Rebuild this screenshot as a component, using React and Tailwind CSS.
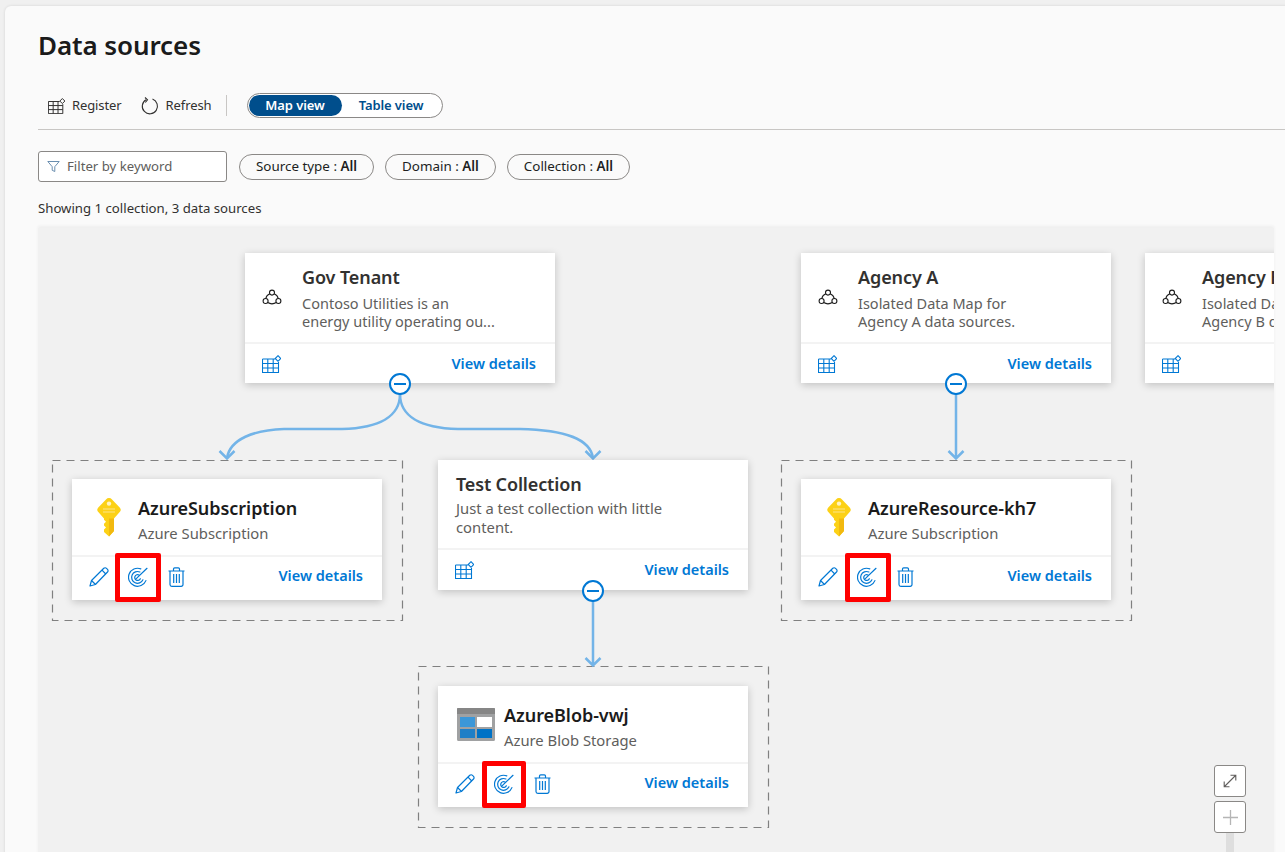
import React from 'react';

const GridIcon = ({ className = 'text-[#0078d4]' }) => (
  <svg width="19" height="18" viewBox="0 0 19 18" fill="none" stroke="currentColor" strokeWidth="1.1" className={className}>
    <path d="M.5 4v13.500h16V7M.5 4h12.500M.5 8.500h16M.5 13h16M5.800 4v13.500M11.200 4v13.500" />
    <path d="M16 .7l2.800 2.800L16 6.300l-2.800-2.800z" />
  </svg>
);

const CollectionIcon = () => (
  <svg width="20" height="18" viewBox="0 0 20 18" fill="none" stroke="#1b1b1b" strokeWidth="1.1">
    <circle cx="10" cy="3.6" r="2.5" />
    <circle cx="3.6" cy="12" r="2.5" />
    <circle cx="16.4" cy="12" r="2.5" />
    <path d="M7.800 4.800C5.600 5.800 4.200 7.500 3.800 9.500M12.200 4.800c2.200 1 3.600 2.700 4 4.700M5.700 13.600c2.600 1.500 6 1.500 8.600 0" />
  </svg>
);

const KeyIcon = () => (
  <svg width="24" height="39" viewBox="0 0 24 39">
    <path d="M9 1.400a4 4 0 0 1 6 0l7.700 8.100a3.400 3.400 0 0 1 0 4.600L17 20.500V33l-5 5.400L7 34v-2.600l2-2-2-2v-1.600l2-2-2-2v-1.300L1.300 14.100a3.400 3.400 0 0 1 0-4.600z" fill="#fcd116" />
    <path d="M12 20.500h5V33l-5 5.400z" fill="#f2b90f" />
    <circle cx="12" cy="5.600" r="2.200" fill="#fff4c2" />
    <path d="M6 11h12M6 14h12" stroke="#fbe58a" strokeWidth="1.2" />
  </svg>
);

const BlobIcon = () => (
  <svg width="38" height="33" viewBox="0 0 38 33">
    <path d="M0 1.500A1.500 1.500 0 0 1 1.500 0h35A1.500 1.500 0 0 1 38 1.500v30a1.500 1.500 0 0 1-1.500 1.500h-35A1.500 1.500 0 0 1 0 31.500z" fill="#a0a1a2" />
    <path d="M0 0h38v6H0z" fill="#7a7a7a" opacity=".7" />
    <path d="M3 9h15v10H3z" fill="#3b97d8" />
    <path d="M20 9h15v10H20z" fill="#fff" />
    <path d="M3 21h15v9H3z" fill="#1f7fc7" />
    <path d="M20 21h15v9H20z" fill="#0072c6" />
  </svg>
);

const PencilIcon = () => (
  <svg width="20" height="20" viewBox="0 0 20 20" fill="none" stroke="#0078d4" strokeWidth="1.2" strokeLinejoin="round">
    <path d="M1 19l1.500-5.500L14.800 1.300a1.900 1.900 0 0 1 2.700 0l1 1a1.900 1.900 0 0 1 0 2.700L6.400 17.500z" />
    <path d="M2.500 13.500l4 4M13 3.200l3.800 3.800" />
  </svg>
);

const ScanIcon = () => (
  <svg width="20" height="20" viewBox="0 0 20 20" fill="none" stroke="#0078d4" strokeWidth="1.2" strokeLinecap="round" className="-ml-[1px] -mr-[1px]">
    <path d="M12.800 1.900a9 9 0 1 0 5.100 11.700" />
    <path d="M11.900 5a5.900 5.900 0 1 0 3 7.800" />
    <path d="M11 8a2.900 2.900 0 1 0 1.300 3.700" />
    <path d="M8 11.900L19 1.300" />
  </svg>
);

const TrashIcon = () => (
  <svg width="17" height="20" viewBox="0 0 17 20" fill="none" stroke="#0078d4" strokeWidth="1.2">
    <path d="M.5 4h16M5.500 4V2a1.200 1.200 0 0 1 1.200-1.200h3.600A1.200 1.200 0 0 1 11.500 2v2" />
    <path d="M2 4v13.500A1.800 1.800 0 0 0 3.800 19.300h9.400a1.800 1.800 0 0 0 1.800-1.800V4" />
    <path d="M5.700 7v9M8.500 7v9M11.300 7v9" />
  </svg>
);

const MinusButton = ({ className }) => (
  <div className={`absolute w-[22px] h-[22px] rounded-full bg-white border-[2.5px] border-[#0078d4] flex items-center justify-center ${className}`}>
    <div className="w-[12px] h-[2.5px] bg-[#0078d4]" />
  </div>
);

const ViewDetails = ({ className = '' }) => <span className={`text-[#0078d4] text-[14.5px] font-semibold ${className}`}>View details</span>;

const CollectionCard = ({ className, title, lines }) => (
  <div className={`absolute w-[310px] h-[130px] bg-white shadow-[0_2px_8px_rgba(0,0,0,0.2)] flex flex-col ${className}`}>
    <div className="h-[91px] flex items-center border-b-2 border-[#f3f3f3]">
      <div className="w-[57px] flex justify-end pr-[20px]"><CollectionIcon /></div>
      <div className="whitespace-nowrap">
        <div className="text-[18px] leading-[24px] font-semibold text-[#323130] tracking-[-0.1px]">{title}</div>
        <div className="text-[14.5px] leading-[18px] text-[#605e5c] mt-[5px]">
          {lines.map((l) => <div key={l}>{l}</div>)}
        </div>
      </div>
    </div>
    <div className="flex-1 flex items-center justify-between pl-[17px] pr-[19px]">
      <GridIcon />
      <ViewDetails />
    </div>
  </div>
);

const SourceCard = ({ className, icon, iconBox, title, sub }) => (
  <div className={`absolute w-[310px] h-[121px] bg-white shadow-[0_2px_8px_rgba(0,0,0,0.2)] flex flex-col ${className}`}>
    <div className="h-[78px] flex items-center border-b-2 border-[#f3f3f3]">
      <div className={`flex justify-center ${iconBox}`}>{icon}</div>
      <div className="whitespace-nowrap pt-[5px]">
        <div className="text-[18px] leading-[24px] font-semibold text-[#1b1b1b] tracking-[-0.05px]">{title}</div>
        <div className="text-[14.8px] leading-[20px] text-[#605e5c] mt-[3px]">{sub}</div>
      </div>
    </div>
    <div className="flex-1 flex items-center justify-between pl-[17px] pr-[19px] pb-[3px]">
      <div className="flex items-center gap-[20px]">
        <PencilIcon />
        <ScanIcon />
        <div className="ml-[1px]"><TrashIcon /></div>
      </div>
      <ViewDetails className="-mt-[2px]" />
    </div>
  </div>
);

const Highlight = ({ className }) => (
  <div className={`absolute border-[5px] border-[#ff0000] rounded-[2px] ${className}`} />
);

const Chip = ({ label }) => (
  <div className="h-[26px] px-[16px] flex items-center rounded-full border border-[#8a8886] text-[13.4px] text-[#201f1e] whitespace-nowrap">
    {label} :&nbsp;<span className="font-semibold">All</span>
  </div>
);

export default function App() {
  return (
    <div className="h-[852px] overflow-hidden bg-[#f0f0f0] pl-[5px] pt-[6px] font-['Noto_Sans','Open_Sans',sans-serif]">
      <div className="h-[900px] w-[1290px] rounded-tl-[6px] bg-[#fafafa] shadow-[0_0_3px_rgba(0,0,0,0.12)] pl-[33px] pr-[10px]">
        <h1 className="pt-[21px] text-[26px] leading-[36px] font-semibold text-[#1b1b1b] tracking-[-0.1px]">Data sources</h1>

        {/* toolbar */}
        <div className="mt-[24px] h-[43px] border-b border-[#c8c6c4] w-[1247px] flex items-start pt-[6px] text-[13px] text-[#323130] tracking-[-0.1px]">
          <div className="flex items-center h-[25px] pl-[9px] gap-[6px]">
            <GridIcon className="text-[#323130] scale-90" />
            <span>Register</span>
          </div>
          <div className="flex items-center h-[25px] pl-[19px] gap-[7px]">
            <svg width="18" height="18" viewBox="0 0 18 18" fill="none" stroke="#323130" strokeWidth="1.1">
              <path d="M11.500 2.100A7.600 7.600 0 1 1 5 2.700" />
              <path d="M4 .5l2.500 2.300L4.300 5.500" />
            </svg>
            <span>Refresh</span>
          </div>
          <div className="ml-[14px] w-px h-[21px] bg-[#c8c6c4] mt-[2px]" />
          <div className="ml-[20px] w-[196px] h-[25px] rounded-full border border-[#8a8886] bg-white flex items-center p-[1px] font-semibold text-[13px]">
            <div className="w-[93px] h-[21px] rounded-full bg-[#004e8c] text-white flex items-center justify-center">Map view</div>
            <div className="flex-1 text-center text-[#004e8c]">Table view</div>
          </div>
        </div>

        {/* filters */}
        <div className="mt-[21px] flex items-center">
          <div className="w-[189px] h-[31px] rounded-[3px] border border-[#8a8886] bg-white flex items-center pl-[8px] gap-[7px] text-[13.2px] text-[#605e5c]">
            <svg width="13" height="13" viewBox="0 0 13 13" fill="none" stroke="#6b8fb0" strokeWidth="1">
              <path d="M.8 1.500h11.400L7.800 6.700v4.800l-2.600-1.200V6.700z" />
            </svg>
            Filter by keyword
          </div>
          <div className="ml-[12px] flex gap-[11px]">
            <Chip label="Source type" />
            <Chip label="Domain" />
            <Chip label="Collection" />
          </div>
        </div>

        <div className="mt-[17px] text-[13.2px] leading-[18px] text-[#323130]">Showing 1 collection, 3 data sources</div>

        {/* map canvas: nodes sit on free positions */}
        <div className="relative mt-[11px] w-[1236px] h-[640px] bg-[#f1f1f1] overflow-hidden shadow-[0_-2px_3px_rgba(0,0,0,0.05)]">
          <svg width="1236" height="640" className="absolute left-0 top-0" fill="none" stroke="#73b4e8" strokeWidth="2.5">
            <g stroke="#808080" strokeWidth="1.2" strokeDasharray="8 6">
              <rect x="14.500" y="232.500" width="350" height="160" />
              <rect x="743.500" y="232.500" width="350" height="160" />
              <rect x="380.500" y="438.500" width="350" height="161" />
            </g>
            <path d="M362 166c0 22-20 34-58 35h-58c-30 1-54 10-57 29" />
            <path d="M362 166c0 22 20 34 58 35h62c46 1 70 10 73 29" />
            <path d="M181.500 223l7.500 7.500 7.500-7.500" />
            <path d="M547.500 223l7.500 7.500 7.500-7.500" />
            <path d="M918 166v64M910.500 223l7.500 7.500 7.500-7.500" />
            <path d="M555 373v64M547.500 430l7.500 7.500 7.500-7.500" />
          </svg>

          <CollectionCard className="left-[207px] top-[25px]" title="Gov Tenant" lines={['Contoso Utilities is an', 'energy utility operating ou...']} />
          <CollectionCard className="left-[763px] top-[25px]" title="Agency A" lines={['Isolated Data Map for', 'Agency A data sources.']} />
          <CollectionCard className="left-[1107px] top-[25px]" title="Agency B" lines={['Isolated Data Map for', 'Agency B data sources.']} />

          <div className="absolute left-[400px] top-[232px] w-[310px] h-[130px] bg-white shadow-[0_2px_8px_rgba(0,0,0,0.2)] flex flex-col">
            <div className="h-[90px] pl-[18px] pt-[12px] border-b-2 border-[#f3f3f3] whitespace-nowrap">
              <div className="text-[18px] leading-[24px] font-semibold text-[#323130] tracking-[-0.15px]">Test Collection</div>
              <div className="text-[14.8px] leading-[19px] text-[#605e5c] mt-[3px]">
                <div>Just a test collection with little</div>
                <div>content.</div>
              </div>
            </div>
            <div className="flex-1 flex items-center justify-between pl-[17px] pr-[19px]">
              <GridIcon />
              <ViewDetails />
            </div>
          </div>

          <SourceCard className="left-[34px] top-[251px]" iconBox="w-[66px] pl-[8px]" icon={<KeyIcon />} title="AzureSubscription" sub="Azure Subscription" />
          <SourceCard className="left-[763px] top-[251px]" iconBox="w-[67px] pl-[8px]" icon={<KeyIcon />} title="AzureResource-kh7" sub="Azure Subscription" />
          <SourceCard className="left-[400px] top-[458px]" iconBox="w-[66px] pl-[10px]" icon={<BlobIcon />} title="AzureBlob-vwj" sub="Azure Blob Storage" />

          <MinusButton className="left-[351px] top-[145px]" />
          <MinusButton className="left-[907px] top-[145px]" />
          <MinusButton className="left-[544px] top-[352px]" />

          <Highlight className="left-[77px] top-[325px] w-[46px] h-[49px]" />
          <Highlight className="left-[807px] top-[325px] w-[46px] h-[49px]" />
          <Highlight className="left-[444px] top-[533px] w-[44px] h-[47px]" />

          {/* zoom controls */}
          <div className="absolute left-[1188px] top-[600px] w-[8px] h-[40px] bg-[#dedede]" />
          <div className="absolute left-[1176px] top-[537px] w-[32px] h-[32px] rounded-[3px] border border-[#8a8886] bg-white flex items-center justify-center">
            <svg width="14" height="14" viewBox="0 0 14 14" fill="none" stroke="#605e5c" strokeWidth="1.1">
              <path d="M1.500 12.500l11-11M7.500 1.200h5.300v5.300M1.200 7.500v5.300h5.300" />
            </svg>
          </div>
          <div className="absolute left-[1176px] top-[573px] w-[32px] h-[32px] rounded-[3px] border border-[#8a8886] bg-white flex items-center justify-center">
            <svg width="15" height="15" viewBox="0 0 15 15" fill="none" stroke="#b5b5b5" strokeWidth="1.3">
              <path d="M7.500 0v15M0 7.500h15" />
            </svg>
          </div>
        </div>
      </div>
    </div>
  );
}
